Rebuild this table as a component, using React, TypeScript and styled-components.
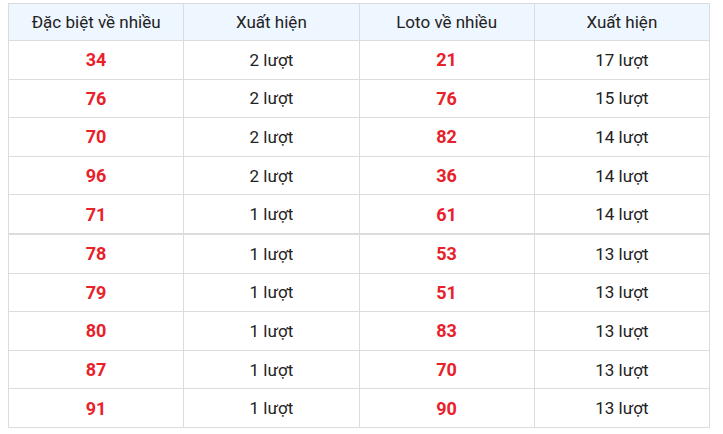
import React from "react";
import styled, { createGlobalStyle } from "styled-components";

const Global = createGlobalStyle`
  html, body { margin: 0; padding: 0; background: #fff; }
  body { font-family: Roboto, "Noto Sans", Arial, sans-serif; }
`;

const Wrap = styled.div`
  padding: 3px 14px 0 8px;
`;

const Table = styled.table`
  width: 702px;
  border-collapse: collapse;
  table-layout: fixed;
  font-size: 17px;
`;

const Th = styled.th`
  height: 36px;
  padding: 0;
  background: #eef6ff;
  border: 1px solid #dcdcdc;
  font-weight: 400;
  font-size: 17px;
  color: #222;
  text-align: center;
  vertical-align: middle;
`;

const Tr = styled.tr<{ $thick?: boolean }>`
  & > td {
    border-top: ${(p) => (p.$thick ? "2px solid #dcdcdc" : "1px solid #dcdcdc")};
  }
`;

const Td = styled.td<{ $num?: boolean }>`
  height: 37.6px;
  padding: 0;
  border: 1px solid #dcdcdc;
  text-align: center;
  vertical-align: middle;
  color: ${(p) => (p.$num ? "#e8212b" : "#222")};
  font-weight: ${(p) => (p.$num ? 700 : 400)};
  font-size: ${(p) => (p.$num ? "18px" : "17px")};
`;

const rows: [string, string, string, string][] = [
  ["34", "2 lượt", "21", "17 lượt"],
  ["76", "2 lượt", "76", "15 lượt"],
  ["70", "2 lượt", "82", "14 lượt"],
  ["96", "2 lượt", "36", "14 lượt"],
  ["71", "1 lượt", "61", "14 lượt"],
  ["78", "1 lượt", "53", "13 lượt"],
  ["79", "1 lượt", "51", "13 lượt"],
  ["80", "1 lượt", "83", "13 lượt"],
  ["87", "1 lượt", "70", "13 lượt"],
  ["91", "1 lượt", "90", "13 lượt"],
];

export default function App() {
  return (
    <>
      <Global />
      <Wrap>
        <Table>
          <thead>
            <tr>
              <Th>Đặc biệt về nhiều</Th>
              <Th>Xuất hiện</Th>
              <Th>Loto về nhiều</Th>
              <Th>Xuất hiện</Th>
            </tr>
          </thead>
          <tbody>
            {rows.map((r, i) => (
              <Tr key={i} $thick={i === 5}>
                <Td $num>{r[0]}</Td>
                <Td>{r[1]}</Td>
                <Td $num>{r[2]}</Td>
                <Td>{r[3]}</Td>
              </Tr>
            ))}
          </tbody>
        </Table>
      </Wrap>
    </>
  );
}
